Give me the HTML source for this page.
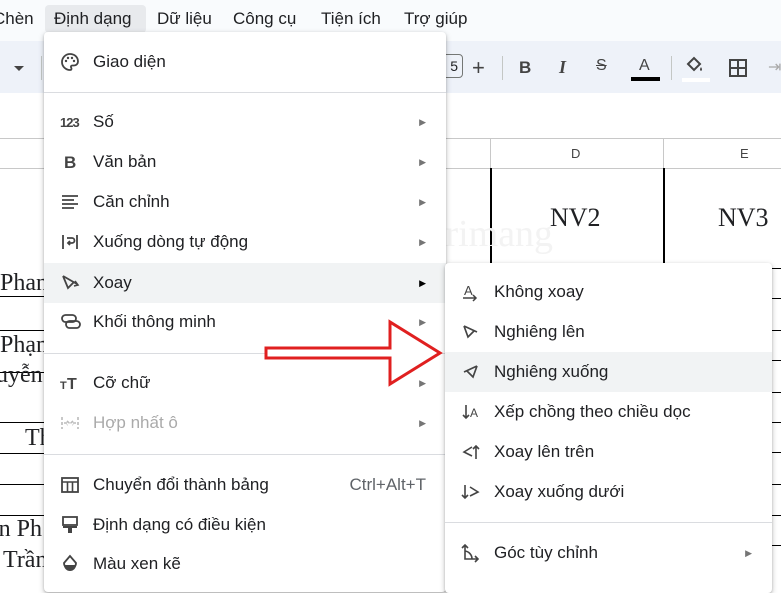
<!DOCTYPE html>
<html><head><meta charset="utf-8"><style>
*{margin:0;padding:0;box-sizing:border-box}
body{width:781px;height:574px;overflow:hidden;position:relative;background:#fff;font-family:"Liberation Sans",Arial,sans-serif;color:#202124}
.abs{position:absolute}
.mb{font-size:17px;top:9px;color:#202124}
.tb{top:41px;left:0;width:781px;height:52px;background:#eef2f9}
.hl{background:#e8eaed}
.line{position:absolute;background:#c8c8c8;height:1px}
.bl{position:absolute;background:#000;height:1px}
.menu{position:absolute;background:#fff;box-shadow:0 2px 6px rgba(0,0,0,.25),0 1px 2px rgba(0,0,0,.15);border-radius:4px}
.it{position:absolute;left:0;right:0;height:40px;font-size:17px;line-height:40px;padding-left:49px;color:#202124}
.it svg{position:absolute;left:16px;top:10px}
.ar{position:absolute;right:20px;top:0;font-size:9px;color:#757575}
.sep{position:absolute;left:0;right:0;height:1px;background:#dadce0}
.tms{font-family:"Liberation Serif",serif;font-size:26px;position:absolute}
</style></head><body>
<div class="abs" style="left:0;top:0;width:781px;height:41px;background:#f9fbfd"></div>
<div class="abs hl" style="left:45px;top:5px;width:101px;height:28px;border-radius:4px"></div>
<div class="abs mb" style="left:-7px">Chèn</div>
<div class="abs mb" style="left:54px">Định dạng</div>
<div class="abs mb" style="left:157px">Dữ liệu</div>
<div class="abs mb" style="left:233px">Công cụ</div>
<div class="abs mb" style="left:321px">Tiện ích</div>
<div class="abs mb" style="left:404px">Trợ giúp</div>
<div class="abs tb"></div>
<div class="abs" style="left:14px;top:66px;border:5px solid transparent;border-top:5px solid #444;width:0;height:0"></div>
<div class="abs" style="left:41px;top:56px;width:1px;height:24px;background:#c4c7c5"></div>
<div class="abs" style="left:440px;top:54px;width:23px;height:24px;border:1px solid #747775;border-radius:4px;font-size:14px;line-height:22px;text-align:right;padding-right:4px">5</div>
<div class="abs" style="left:472px;top:55px;font-size:22px;color:#444">+</div>
<div class="abs" style="left:502px;top:56px;width:1px;height:24px;background:#c4c7c5"></div>
<div class="abs" style="left:519px;top:58px;font-size:17px;font-weight:bold;color:#444">B</div>
<div class="abs" style="left:559px;top:57px;font-size:18px;font-style:italic;font-weight:bold;color:#444;font-family:'Liberation Serif',serif">I</div>
<div class="abs" style="left:596px;top:57px;font-size:16px;color:#444;text-decoration:line-through">S</div>
<div class="abs" style="left:639px;top:57px;font-size:16px;color:#444">A</div>
<div class="abs" style="left:631px;top:77px;width:29px;height:4px;background:#000"></div>
<div class="abs" style="left:671px;top:56px;width:1px;height:24px;background:#c4c7c5"></div>
<svg class="abs" style="left:684px;top:55px" width="22" height="20" viewBox="0 0 22 20"><path d="M4 9 L10 3 L16 9 L10 15 Z" fill="none" stroke="#444" stroke-width="2"/><path d="M17 12 q2 3 0 4 q-2 -1 0 -4" fill="#444"/></svg>
<div class="abs" style="left:682px;top:78px;width:28px;height:4px;background:#fff"></div>
<svg class="abs" style="left:729px;top:59px" width="18" height="18"><rect x="1" y="1" width="16" height="16" fill="none" stroke="#444" stroke-width="2"/><path d="M9 1V17M1 9H17" stroke="#444" stroke-width="2"/></svg>
<div class="abs" style="left:768px;top:57px;font-size:16px;color:#aaa">⇥</div>
<div class="line" style="left:0;top:138px;width:781px"></div>
<div class="line" style="left:0;top:168px;width:781px"></div>
<div class="abs" style="left:490px;top:138px;width:1px;height:30px;background:#c8c8c8"></div>
<div class="abs" style="left:663px;top:138px;width:1px;height:30px;background:#c8c8c8"></div>
<div class="abs" style="left:571px;top:146px;font-size:13px;color:#444">D</div>
<div class="abs" style="left:740px;top:146px;font-size:13px;color:#444">E</div>
<div class="abs" style="left:490px;top:168px;width:2px;height:100px;background:#000"></div>
<div class="abs" style="left:663px;top:168px;width:2px;height:100px;background:#000"></div>
<div class="tms" style="left:550px;top:203px">NV2</div>
<div class="tms" style="left:718px;top:203px">NV3</div>
<div class="abs" style="left:380px;top:212px;font-size:38px;color:#f3f3f3;font-family:'Liberation Serif',serif">uantrimang</div>
<div class="bl" style="left:0;top:296px;width:45px"></div>
<div class="bl" style="left:0;top:330px;width:45px"></div>
<div class="bl" style="left:0;top:372px;width:45px"></div>
<div class="bl" style="left:0;top:422px;width:45px"></div>
<div class="bl" style="left:0;top:453px;width:45px"></div>
<div class="bl" style="left:0;top:484px;width:45px"></div>
<div class="bl" style="left:0;top:515px;width:45px"></div>
<div class="tms" style="left:0;top:270px;font-size:24px">Phan</div>
<div class="tms" style="left:0;top:332px;font-size:24px">Phạm</div>
<div class="tms" style="left:-4px;top:362px;font-size:24px">uyễn</div>
<div class="tms" style="left:25px;top:425px;font-size:24px">Th</div>
<div class="tms" style="left:-12px;top:516px;font-size:24px">ần Ph</div>
<div class="tms" style="left:3px;top:547px;font-size:24px">Trần</div>
<div class="bl" style="left:772px;top:268px;width:9px"></div>
<div class="bl" style="left:772px;top:298px;width:9px"></div>
<div class="bl" style="left:772px;top:330px;width:9px"></div>
<div class="bl" style="left:772px;top:360px;width:9px"></div>
<div class="bl" style="left:772px;top:392px;width:9px"></div>
<div class="bl" style="left:772px;top:422px;width:9px"></div>
<div class="bl" style="left:772px;top:452px;width:9px"></div>
<div class="bl" style="left:772px;top:484px;width:9px"></div>
<div class="bl" style="left:772px;top:515px;width:9px"></div>
<div class="bl" style="left:772px;top:545px;width:9px"></div>
<div class="menu" style="left:44px;top:32px;width:402px;height:560px">
 <div class="it" style="top:10px"><svg width="20" height="20" viewBox="0 0 20 20"><path d="M10 2a8 8 0 0 0 0 16c1 0 1.5-.7 1.5-1.4 0-.8-.6-1-.6-1.8 0-.8.7-1.3 1.5-1.3H14a4 4 0 0 0 4-4C18 5 14.4 2 10 2z" fill="none" stroke="#444" stroke-width="1.8"/><circle cx="6" cy="9" r="1.2" fill="#444"/><circle cx="8" cy="6" r="1.2" fill="#444"/><circle cx="12" cy="6" r="1.2" fill="#444"/><circle cx="14" cy="9" r="1.2" fill="#444"/></svg>Giao diện</div>
 <div class="sep" style="top:60px"></div>
 <div class="it" style="top:70px"><svg width="22" height="20"><text x="0" y="15" font-size="13" font-weight="bold" fill="#444" font-family="Liberation Sans" letter-spacing="-1">123</text></svg>Số<span class="ar">▶</span></div>
 <div class="it" style="top:110px"><svg width="20" height="20"><text x="4" y="16" font-size="17" font-weight="bold" fill="#444" font-family="Liberation Sans">B</text></svg>Văn bản<span class="ar">▶</span></div>
 <div class="it" style="top:150px"><svg width="20" height="20"><path d="M2 4H18M2 8H14M2 12H18M2 16H14" stroke="#444" stroke-width="1.8"/></svg>Căn chỉnh<span class="ar">▶</span></div>
 <div class="it" style="top:190px"><svg width="20" height="20"><path d="M3 3V17M17 3V17M7 6H12a2.5 2.5 0 0 1 0 5H8M10 9l-2 2 2 2" fill="none" stroke="#444" stroke-width="1.8"/></svg>Xuống dòng tự động<span class="ar">▶</span></div>
 <div class="it" style="top:231px;background:#f1f3f4"><svg width="20" height="20"><path d="M3 3L17 11M3 3L8 15L14 9" fill="none" stroke="#444" stroke-width="1.8"/><path d="M15 8l3 4-4 1" fill="none" stroke="#444" stroke-width="1.6"/></svg>Xoay<span class="ar" style="color:#000">▶</span></div>
 <div class="it" style="top:270px"><svg width="22" height="20"><rect x="2" y="3" width="14" height="7" rx="3.5" fill="none" stroke="#444" stroke-width="1.8"/><rect x="6" y="9" width="14" height="7" rx="3.5" fill="none" stroke="#444" stroke-width="1.8"/></svg>Khối thông minh<span class="ar">▶</span></div>
 <div class="sep" style="top:321px"></div>
 <div class="it" style="top:331px"><svg width="22" height="20"><text x="0" y="16" font-size="11" font-weight="bold" fill="#444" font-family="Liberation Sans">T</text><text x="7" y="16" font-size="16" font-weight="bold" fill="#444" font-family="Liberation Sans">T</text></svg>Cỡ chữ<span class="ar">▶</span></div>
 <div class="it" style="top:371px;color:#aaa"><svg width="20" height="20"><path d="M2 4V16M18 4V16M4 10H9M7 8l2 2-2 2M16 10H11M13 8l-2 2 2 2" fill="none" stroke="#bbb" stroke-width="1.6" stroke-dasharray="3 2"/></svg>Hợp nhất ô<span class="ar">▶</span></div>
 <div class="sep" style="top:422px"></div>
 <div class="it" style="top:433px"><svg width="20" height="20"><rect x="2" y="3" width="16" height="14" fill="none" stroke="#444" stroke-width="1.8"/><path d="M2 7H18M7.5 7V17M12.5 7V17" stroke="#444" stroke-width="1.6"/></svg>Chuyển đổi thành bảng<span class="abs" style="right:20px;top:0;color:#5f6368">Ctrl+Alt+T</span></div>
 <div class="it" style="top:473px"><svg width="20" height="20"><rect x="3" y="2" width="14" height="8" fill="none" stroke="#444" stroke-width="1.8"/><path d="M3 11H17V13H3zM8 13H12V18H8z" fill="#444"/></svg>Định dạng có điều kiện</div>
 <div class="it" style="top:512px"><svg width="20" height="20"><path d="M10 2L4 9a6 6 0 1 0 12 0z" fill="none" stroke="#444" stroke-width="1.8"/><path d="M4 11h12a6 6 0 0 1-12 0z" fill="#444"/></svg>Màu xen kẽ</div>
</div>
<div class="menu" style="left:445px;top:263px;width:327px;height:330px">
 <div class="it" style="top:9px"><svg width="20" height="20"><text x="3" y="13" font-size="13" fill="#444" font-family="Liberation Sans">A</text><path d="M2 16H15M12 13l3 3-3 3" fill="none" stroke="#444" stroke-width="1.5"/></svg>Không xoay</div>
 <div class="it" style="top:49px"><svg width="20" height="20"><path d="M3 4L16 10M3 4L7 15L13 9" fill="none" stroke="#444" stroke-width="1.7"/></svg>Nghiêng lên</div>
 <div class="it" style="top:89px;background:#f1f3f4"><svg width="20" height="20"><path d="M16 4L3 10M16 4L12 15L6 9" fill="none" stroke="#444" stroke-width="1.7"/></svg>Nghiêng xuống</div>
 <div class="it" style="top:129px"><svg width="22" height="20"><path d="M5 3V16M2 13l3 3 3-3" fill="none" stroke="#444" stroke-width="1.6"/><text x="9" y="15" font-size="12" fill="#444" font-family="Liberation Sans">A</text></svg>Xếp chồng theo chiều dọc</div>
 <div class="it" style="top:169px"><svg width="20" height="20"><path d="M11 5L3 10L11 14M15 17V4M12 7l3-3 3 3" fill="none" stroke="#444" stroke-width="1.6"/></svg>Xoay lên trên</div>
 <div class="it" style="top:209px"><svg width="20" height="20"><path d="M9 5L17 10L9 14M4 3V16M1 13l3 3 3-3" fill="none" stroke="#444" stroke-width="1.6"/></svg>Xoay xuống dưới</div>
 <div class="sep" style="top:259px"></div>
 <div class="it" style="top:270px"><svg width="22" height="20"><path d="M4 2V16H17M1 5l3-3 3 3M14 13l3 3-3 3M4 8a8 8 0 0 1 7 8" fill="none" stroke="#444" stroke-width="1.6"/></svg>Góc tùy chỉnh<span class="ar">▶</span></div>
</div>
<svg class="abs" style="left:262px;top:318px" width="184" height="70"><path d="M4 30H128V4L178 35L128 66V40H4Z" fill="#fff" stroke="#e02020" stroke-width="3" stroke-linejoin="miter"/></svg>
</body></html>
